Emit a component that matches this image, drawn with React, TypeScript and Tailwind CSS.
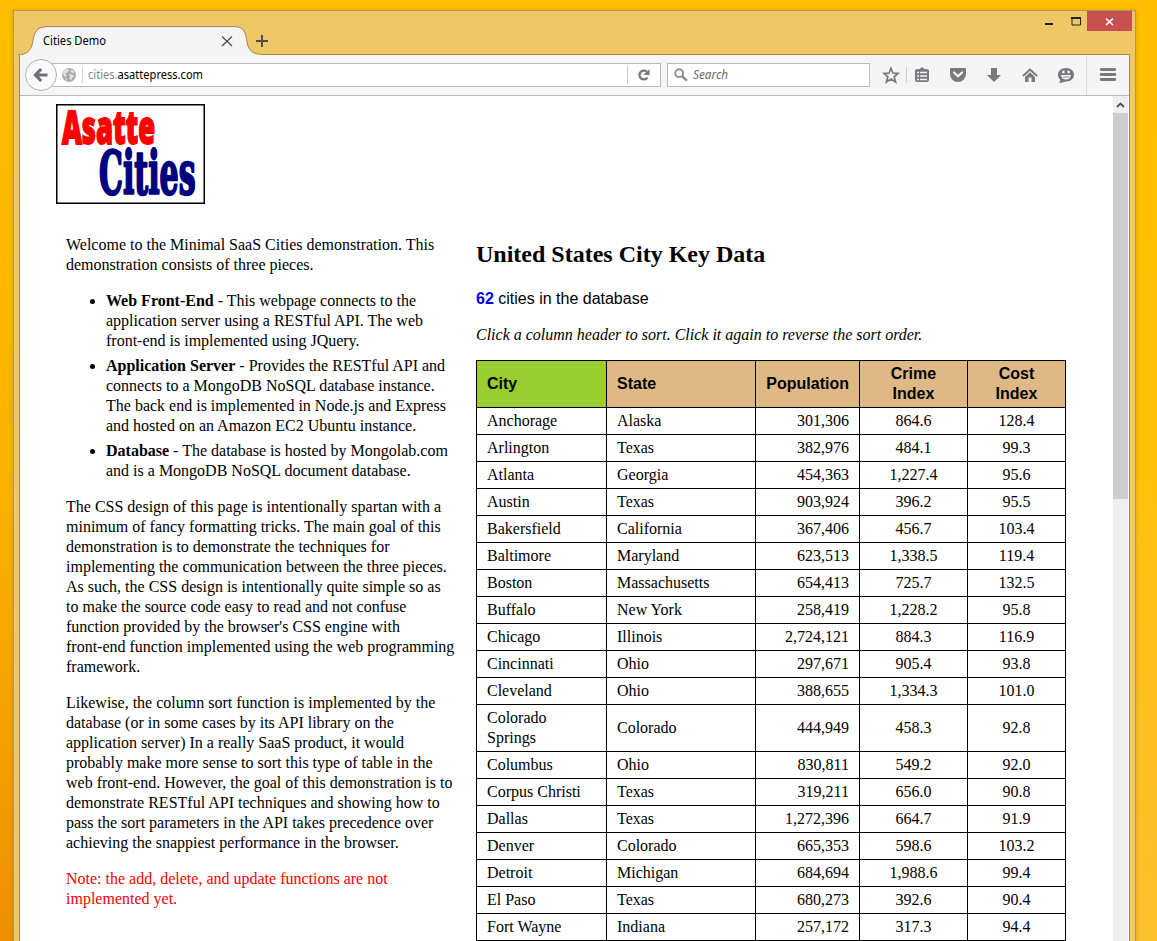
import React from "react";

type City = [string, string, string, string, string];

const cities: City[] = [
  ["Anchorage", "Alaska", "301,306", "864.6", "128.4"],
  ["Arlington", "Texas", "382,976", "484.1", "99.3"],
  ["Atlanta", "Georgia", "454,363", "1,227.4", "95.6"],
  ["Austin", "Texas", "903,924", "396.2", "95.5"],
  ["Bakersfield", "California", "367,406", "456.7", "103.4"],
  ["Baltimore", "Maryland", "623,513", "1,338.5", "119.4"],
  ["Boston", "Massachusetts", "654,413", "725.7", "132.5"],
  ["Buffalo", "New York", "258,419", "1,228.2", "95.8"],
  ["Chicago", "Illinois", "2,724,121", "884.3", "116.9"],
  ["Cincinnati", "Ohio", "297,671", "905.4", "93.8"],
  ["Cleveland", "Ohio", "388,655", "1,334.3", "101.0"],
  ["Colorado Springs", "Colorado", "444,949", "458.3", "92.8"],
  ["Columbus", "Ohio", "830,811", "549.2", "92.0"],
  ["Corpus Christi", "Texas", "319,211", "656.0", "90.8"],
  ["Dallas", "Texas", "1,272,396", "664.7", "91.9"],
  ["Denver", "Colorado", "665,353", "598.6", "103.2"],
  ["Detroit", "Michigan", "684,694", "1,988.6", "99.4"],
  ["El Paso", "Texas", "680,273", "392.6", "90.4"],
  ["Fort Wayne", "Indiana", "257,172", "317.3", "94.4"],
];

function Lines({ rows }: { rows: React.ReactNode[] }) {
  return (
    <>
      {rows.map((row, i) => (
        <span key={i} className="block whitespace-nowrap">{row}</span>
      ))}
    </>
  );
}

function TitleBar() {
  return (
    <div className="relative flex h-11 shrink-0 items-end">
      <svg className="-ml-px block shrink-0" width="246" height="29" viewBox="0 0 246 29">
        <path d="M0.5 28.5C8 28.5 12.500 26 14.500 17C16.500 5 19 0.900 30 0.900H216C226 0.900 227.500 6 229 16C230.500 25 235 28.500 244 28.500L244 29H0Z" fill="#f5f5f5" />
        <path d="M0 28.5C8 28.500 12.500 26 14.500 17C16.500 5 19 0.600 30 0.600H216C226 0.600 227.500 6 229 16C230.500 25 235 28.500 246 28.500" fill="none" stroke="#a08a50" />
        <path d="M204 10.500L214 20M214 10.500L204 20" stroke="#4c4c4c" strokeWidth="1.200" />
        <text x="25" y="19" fontSize="12" fontFamily="Noto Sans, Open Sans, sans-serif" textLength="63" lengthAdjust="spacingAndGlyphs" fill="#000">Cities Demo</text>
      </svg>
      <div className="h-px flex-1 bg-[#a08a50]" />
      <svg className="absolute left-[237px] top-[24px]" width="13" height="13" viewBox="0 0 13 13">
        <path d="M6 0V12M0 6H12" stroke="#4c4c4c" strokeWidth="2" />
      </svg>
      <div className="absolute -right-0.5 top-0 flex h-5">
        <svg width="42" height="20" viewBox="0 0 42 20">
          <path d="M0 12H8V14H0Z" fill="#222" />
          <path d="M27 7.500H35.500V14H27Z" fill="none" stroke="#222" />
          <path d="M26 6H36V8H26Z" fill="#222" />
        </svg>
        <div className="flex w-[45px] items-center justify-center bg-[#c75050]">
          <svg width="9" height="9" viewBox="0 0 9 9">
            <path d="M1 1.500L8 8M8 1.500L1 8" stroke="#fff" strokeWidth="1.600" />
          </svg>
        </div>
      </div>
    </div>
  );
}

function Toolbar() {
  return (
    <div className="relative flex h-[41px] shrink-0 items-center border-b border-[#bdbdbd] bg-[#f5f5f5]">
      <div className="ml-5 flex h-6 w-[621px] items-center border border-[#b3bdc8] bg-white">
        <svg className="ml-[21px]" width="14" height="14" viewBox="0 0 14 14">
          <circle cx="7" cy="7" r="7" fill="#aaa" />
          <path d="M1 4L4 1L7 1.500L6 4L3.500 5.500L4.500 7.500L3 9L1.500 7ZM8 2L11.500 2.500L12.500 5L9.500 4.500ZM7 6L10 6.500L12.500 8L10 10L9 12.500L7.500 11L8 8.500ZM3 10L5 11V13Z" fill="#e4e4e4" />
        </svg>
        <div className="ml-1.5 h-4 w-px bg-[#d0d0d0]" />
        <svg className="ml-[5px] overflow-visible" width="116" height="18">
          <text x="0" y="13" fontSize="12" fontFamily="Noto Sans, Open Sans, sans-serif" textLength="115" lengthAdjust="spacingAndGlyphs" fill="#000">
            <tspan fill="#888">cities.</tspan>asattepress.com
          </text>
        </svg>
        <div className="ml-auto h-[18px] w-px bg-[#ccc]" />
        <svg className="ml-2.5 mr-[10px]" width="12" height="12" viewBox="0 0 12 12">
          <path d="M9.500 8.500A4.400 4.400 0 1 1 8.800 2.700" fill="none" stroke="#777" strokeWidth="2.300" />
          <path d="M11.500 0V6H5.500Z" fill="#777" />
        </svg>
      </div>
      <div className="ml-1.5 flex h-6 w-[203px] items-center border border-[#b3bdc8] bg-white">
        <svg className="ml-1.5" width="14" height="14" viewBox="0 0 14 14">
          <circle cx="5.200" cy="5.200" r="3.900" fill="none" stroke="#929292" strokeWidth="2" />
          <path d="M8 8L12.800 12.600" stroke="#929292" strokeWidth="2.600" />
        </svg>
        <svg className="ml-[5px] overflow-visible" width="36" height="18">
          <text x="0" y="13" fontSize="12" fontStyle="italic" fontFamily="Noto Sans, Open Sans, sans-serif" textLength="35" lengthAdjust="spacingAndGlyphs" fill="#6a6a6a">Search</text>
        </svg>
      </div>
      <svg className="ml-3 shrink-0" width="240" height="40" viewBox="882 56 240 40">
        <path d="M891 69.200L893 74.200L898 74.400L894.200 77.800L895.600 83L891 80L886.400 83L887.800 77.800L884 74.400L889 74.200Z" fill="none" stroke="#777b80" strokeWidth="1.700" />
        <path d="M906.500 68V84" stroke="#ccc" />
        <path d="M918 70H919.500L922 68L924.500 70H926Q929 70 929 72V81Q929 83 927 83H917Q915 83 915 81V72Q915 70 918 70Z" fill="#777b80" />
        <path d="M917 73.500H919M920 73.500H927M917 77H919M920 77H927M917 80.500H919M920 80.500H927" stroke="#f5f5f5" strokeWidth="1.500" />
        <path d="M951 69H965Q966 69 966 70V75A8 8 0 0 1 950 75V70Q950 69 951 69Z" fill="#777b80" />
        <path d="M954 73.500L958 77.300L962 73.500" fill="none" stroke="#f5f5f5" strokeWidth="2.200" strokeLinecap="round" />
        <path d="M991 69H997V76H1001L994 83L987 76H991Z" fill="#777b80" />
        <path d="M1023 77L1030 70.500L1037 77" fill="none" stroke="#777b80" strokeWidth="2" />
        <path d="M1025 78L1030 73.200L1035 78V83H1031.500V78.500H1028.500V83H1025Z" fill="#777b80" />
        <path d="M1066 69C1071 69 1074 72 1074 75.800C1074 80 1070 83 1065.500 82.500C1064 83.500 1061 84 1059 83.500C1060 82.500 1060.500 81.500 1060 80.500C1058.500 79.500 1058 77.500 1058 75.800C1058 72 1061 69 1066 69Z" fill="#777b80" />
        <path d="M1061 76H1071Q1070 80.500 1066 80.500Q1062 80.500 1061 76Z" fill="#f5f5f5" />
        <rect x="1062.300" y="71.700" width="2.200" height="2.600" fill="#f5f5f5" />
        <rect x="1067.500" y="71.700" width="2.200" height="2.600" fill="#f5f5f5" />
        <path d="M1063 78H1069" stroke="#777b80" strokeWidth="0.800" />
        <path d="M1086.500 57V96" stroke="#dcdcdc" />
        <path d="M1101.200 70.500H1114.800M1101.200 75.500H1114.800M1101.200 80.500H1114.800" stroke="#777b80" strokeWidth="2.800" strokeLinecap="round" />
      </svg>
      <svg className="absolute left-[5px] top-1" width="32" height="33" viewBox="0 0 32 33">
        <circle cx="16" cy="16" r="15.500" fill="#fafafa" stroke="#aab4be" />
        <path d="M22.500 16H11M16.200 10L10.500 16L16.200 22" fill="none" stroke="#6d7075" strokeWidth="3.200" />
      </svg>
    </div>
  );
}

function Logo() {
  return (
    <svg className="block" width="149" height="100" viewBox="0 0 149 100" role="img">
      <rect x="0.750" y="0.750" width="147.500" height="98.500" fill="#fff" stroke="#000" strokeWidth="1.500" />
      <g transform="translate(6 40) scale(0.700 1.150)">
        <text fontFamily="Open Sans, sans-serif" fontWeight="800" fontSize="40" textLength="133" lengthAdjust="spacingAndGlyphs" fill="#f00" stroke="#f00" strokeWidth="1.600">Asatte</text>
      </g>
      <g transform="translate(43 90) scale(0.700 1.250)">
        <text fontFamily="DejaVu Serif, serif" fontWeight="700" fontSize="48" textLength="138" lengthAdjust="spacingAndGlyphs" fill="#000080" stroke="#000080" strokeWidth="2" strokeLinejoin="round">Cities</text>
      </g>
    </svg>
  );
}

function Intro() {
  return (
    <div className="mt-[31px] ml-2.5 w-[390px] leading-5">
      <p><Lines rows={["Welcome to the Minimal SaaS Cities demonstration. This", "demonstration consists of three pieces."]} /></p>
      <ul className="mt-4 flex list-disc flex-col gap-[5px] pl-10">
        <li><Lines rows={[<><b>Web Front-End</b> - This webpage connects to the</>, "application server using a RESTful API. The web", "front-end is implemented using JQuery."]} /></li>
        <li><Lines rows={[<><b>Application Server</b> - Provides the RESTful API and</>, "connects to a MongoDB NoSQL database instance.", "The back end is implemented in Node.js and Express", "and hosted on an Amazon EC2 Ubuntu instance."]} /></li>
        <li><Lines rows={[<><b>Database</b> - The database is hosted by Mongolab.com</>, "and is a MongoDB NoSQL document database."]} /></li>
      </ul>
      <p className="mt-4"><Lines rows={["The CSS design of this page is intentionally spartan with a", "minimum of fancy formatting tricks. The main goal of this", "demonstration is to demonstrate the techniques for", "implementing the communication between the three pieces.", "As such, the CSS design is intentionally quite simple so as", "to make the source code easy to read and not confuse", "function provided by the browser's CSS engine with", "front-end function implemented using the web programming", "framework."]} /></p>
      <p className="mt-4"><Lines rows={["Likewise, the column sort function is implemented by the", "database (or in some cases by its API library on the", "application server) In a really SaaS product, it would", "probably make more sense to sort this type of table in the", "web front-end. However, the goal of this demonstration is to", "demonstrate RESTful API techniques and showing how to", "pass the sort parameters in the API takes precedence over", "achieving the snappiest performance in the browser."]} /></p>
      <p className="mt-4 text-[#f00]"><Lines rows={["Note: the add, delete, and update functions are not", "implemented yet."]} /></p>
    </div>
  );
}

function CityTable() {
  return (
    <table className="w-[590px] table-fixed border-separate border-spacing-0 border-t border-l border-black leading-5">
      <colgroup>
        <col className="w-[130px]" /><col className="w-[149px]" /><col className="w-[104px]" /><col className="w-[108px]" /><col className="w-[98px]" />
      </colgroup>
      <thead className="font-['Liberation_Sans',Arial,sans-serif]">
        <tr className="h-[47px] bg-[#deb887]">
          <th className="border-r border-b border-black bg-[#9acd32] px-2.5 text-left">City</th>
          <th className="border-r border-b border-black px-2.5 text-left">State</th>
          <th className="border-r border-b border-black px-2.5 text-right">Population</th>
          <th className="border-r border-b border-black px-6 pt-[3px] pb-[3px]">Crime Index</th>
          <th className="border-r border-b border-black px-6 pt-[3px] pb-[3px]">Cost Index</th>
        </tr>
      </thead>
      <tbody>
        {cities.map(([city, state, population, crime, cost]) => (
          <tr key={city}>
            <td className="border-r border-b border-black px-2.5 py-[3px]">{city}</td>
            <td className="border-r border-b border-black px-2.5 py-[3px]">{state}</td>
            <td className="border-r border-b border-black px-2.5 py-[3px] text-right">{population}</td>
            <td className="border-r border-b border-black px-2.5 py-[3px] text-center">{crime}</td>
            <td className="border-r border-b border-black px-2.5 py-[3px] text-center">{cost}</td>
          </tr>
        ))}
      </tbody>
    </table>
  );
}

function Page() {
  return (
    <div className="flex min-h-0 flex-1 overflow-hidden bg-white font-['Liberation_Serif','Times_New_Roman',serif] text-base text-black">
      <main className="flex-1 pt-2 pl-9">
        <Logo />
        <div className="flex items-start">
          <Intro />
          <div className="mt-9 ml-5">
            <h2 className="text-2xl leading-7 font-bold">United States City Key Data</h2>
            <p className="mt-[21px] font-['Liberation_Sans',Arial,sans-serif] leading-5"><b className="text-[#0000ee]">62</b> cities in the database</p>
            <p className="mt-4 mb-[15px] leading-5 italic">Click a column header to sort. Click it again to reverse the sort order.</p>
            <CityTable />
          </div>
        </div>
      </main>
      <div className="mr-px w-[15px] shrink-0 bg-[#efefef]">
        <svg className="block" width="15" height="17" viewBox="0 0 15 17">
          <path d="M4 11L7.500 7.500L11 11" fill="none" stroke="#505050" strokeWidth="1.800" />
        </svg>
        <div className="h-[386px] bg-[#cdcdcd]" />
      </div>
    </div>
  );
}

export default function App() {
  return (
    <div className="h-[941px] w-[1157px] overflow-hidden bg-linear-to-b from-[#ffbf00] via-[#ffc107] to-[#fbc02d] pt-2.5">
      <div className="flex h-[931px]">
        <div className="-mt-2.5 w-[13px] bg-linear-to-b from-[#ffbe00] via-[#fdb300] via-50% to-[#ed9100]" />
        <div className="flex h-[940px] w-[1123px] flex-col border border-[#b49753] bg-[#f0c766] px-[5px] shadow-[0_0_4px_#80600050]">
          <div className="flex min-h-0 flex-1 flex-col">
            <TitleBar />
            <div className="flex min-h-0 flex-1 flex-col border-x border-[#a08a50]">
              <Toolbar />
              <Page />
            </div>
          </div>
        </div>
      </div>
    </div>
  );
}
